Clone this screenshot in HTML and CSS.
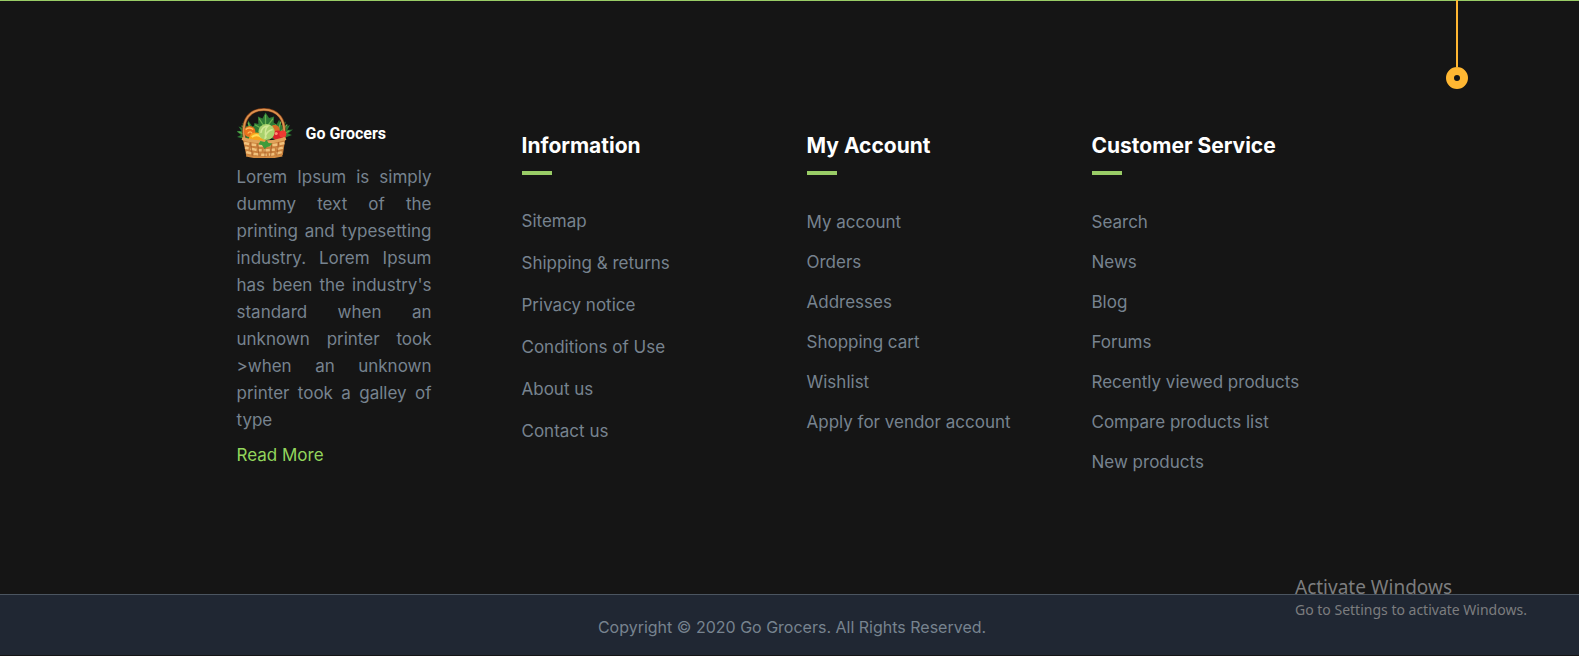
FILE: index.html
```html
<!DOCTYPE html>
<html lang="en">
<head>
<meta charset="utf-8">
<meta name="viewport" content="width=device-width, initial-scale=1">
<title>Go Grocers</title>
<link rel="stylesheet" href="styles.css">
</head>
<body>
<footer class="footer">
  <div class="pendant" aria-hidden="true"></div>
  <div class="footer-main">
    <section class="col about">
      <a class="brand" href="#">
        <svg class="brand-icon" viewBox="2 0 110 100" preserveAspectRatio="none" aria-hidden="true">
          <g fill="#2f7a35">
            <path d="M26 64 2 58l8-4L0 46l11 0-6-9 11 4-4-11 11 7 1-12 8 12 8-4 6 30z"/>
            <path d="M84 64l26-10-8-3 10-8-11 1 5-10-11 5 3-12-10 8-3-12-7 13-6-3-2 28z"/>
            <path d="M34 48l2-18 8 2-1-15 9 4 6-12 7 11 10-3-1 12 8 6-10 14z"/>
          </g>
          <g fill="none" stroke="#68b14f" stroke-width="2.5" stroke-linecap="round">
            <path d="M6 48l22 10M12 36l16 18M24 30l8 20M104 46L84 58M100 34L84 52M88 28l-6 20M58 14v22M46 22l10 16M72 22L60 38M38 34l14 8M78 34l-12 8"/>
          </g>
          <path d="M17 64C9 20 30 3 55 3s46 18 38 61" fill="none" stroke="#8b4519" stroke-width="6"/>
          <path d="M17 64C9 20 30 3 55 3s46 18 38 61" fill="none" stroke="#dc9250" stroke-width="3.5"/>
          <circle cx="27" cy="47" r="11" fill="#e8701c"/>
          <path d="M19 43q7-6 15 0M23 51q5-7 9 0" stroke="#ffc058" stroke-width="2.5" fill="none"/>
          <circle cx="76" cy="44" r="10" fill="#d96d26"/>
          <path d="M25 62q3-17 22-12 13 5 11 18H28z" fill="#f7a51c"/>
          <path d="M31 58q10-8 20 1" stroke="#ffdc55" stroke-width="4" fill="none"/>
          <circle cx="82" cy="55" r="10" fill="#d9212a"/>
          <circle cx="92" cy="52" r="7" fill="#ee3b32"/>
          <circle cx="79" cy="51" r="3" fill="#ff8d73"/>
          <circle cx="60" cy="48" r="16" fill="#a9d16d"/>
          <path d="M49 50q2-14 14-14-8 6-4 24M57 62q1-16 15-19" fill="none" stroke="#d2e896" stroke-width="3"/>
          <path d="M13 60q42 12 84 0l-5 34q-34 12-72 0z" fill="#c9803c"/>
          <g fill="none" stroke="#f1c17c" stroke-width="5">
            <path d="M16 70q40 10 79 0" stroke-dasharray="10 4"/>
            <path d="M18 79q38 11 75 0" stroke-dasharray="7 4 12 3"/>
            <path d="M20 88q36 11 71 0" stroke-dasharray="11 4"/>
          </g>
          <g stroke="#a55a25" stroke-width="1.5"><path d="M29 68l3 28M43 71l2 26M57 72v26M70 71l-2 26M84 68l-4 27"/></g>
          <path d="M12 61q43 14 86 0" fill="none" stroke="#dfa25a" stroke-width="6"/>
          <path d="M20 95q35 9 71 0" fill="none" stroke="#d18b43" stroke-width="4"/>
          <path d="M56 82l-5-8-7-1 4-7 8 2 4-4 4 6 7 1-5 6-5 1z" fill="#3f9b3b"/>
        </svg>
        <span class="brand-name">Go Grocers</span>
      </a>
      <p class="about-text">Lorem Ipsum is simply dummy text of the printing and typesetting industry. Lorem Ipsum has been the industry's standard when an unknown printer took &gt;when an unknown printer took a galley of type</p>
      <a class="read-more" href="#">Read More</a>
    </section>
    <nav class="col links links-wide" aria-labelledby="info">
      <h2 id="info">Information</h2>
      <ul>
        <li><a href="#">Sitemap</a></li>
        <li><a href="#">Shipping &amp; returns</a></li>
        <li><a href="#">Privacy notice</a></li>
        <li><a href="#">Conditions of Use</a></li>
        <li><a href="#">About us</a></li>
        <li><a href="#">Contact us</a></li>
      </ul>
    </nav>
    <nav class="col links" aria-labelledby="account">
      <h2 id="account">My Account</h2>
      <ul>
        <li><a href="#">My account</a></li>
        <li><a href="#">Orders</a></li>
        <li><a href="#">Addresses</a></li>
        <li><a href="#">Shopping cart</a></li>
        <li><a href="#">Wishlist</a></li>
        <li><a href="#">Apply for vendor account</a></li>
      </ul>
    </nav>
    <nav class="col links" aria-labelledby="service">
      <h2 id="service">Customer Service</h2>
      <ul>
        <li><a href="#">Search</a></li>
        <li><a href="#">News</a></li>
        <li><a href="#">Blog</a></li>
        <li><a href="#">Forums</a></li>
        <li><a href="#">Recently viewed products</a></li>
        <li><a href="#">Compare products list</a></li>
        <li><a href="#">New products</a></li>
      </ul>
    </nav>
  </div>
  <div class="copyright">Copyright © 2020 Go Grocers. All Rights Reserved.</div>
  <aside class="watermark">
    <p class="watermark-title">Activate Windows</p>
    <p class="watermark-text">Go to Settings to activate Windows.</p>
  </aside>
</footer>
</body>
</html>
```
FILE: styles.css
```css
* {
  box-sizing: border-box;
}

body {
  margin: 0;
  background: #151515;
  color: #77838f;
  font: 17px/27px Inter, "Open Sans", sans-serif;
}

a {
  color: inherit;
  text-decoration: none;
}

p,
ul,
h2 {
  margin: 0;
  padding: 0;
}

ul {
  list-style: none;
}

.footer {
  position: relative;
  border-top: 1px solid #9c6;
}

.footer-main {
  display: grid;
  grid-template-columns: repeat(4, 1fr);
  max-width: 1144px;
  margin: 0 auto;
  padding: 107px 0 112px 4px;
}

.col {
  padding: 0 15px;
}

.about {
  padding-right: 75px;
}

.brand {
  display: flex;
  align-items: center;
  gap: 13px;
  height: 50px;
  margin-bottom: 6px;
}

.brand-icon {
  flex: none;
  width: 56px;
  height: 50px;
}

.brand-name {
  padding-top: 2px;
  color: #fff;
  font: bold 16px/24px Roboto, "Liberation Sans", sans-serif;
  white-space: nowrap;
}

.about-text {
  margin-bottom: 8px;
  text-align: justify;
}

.read-more {
  display: block;
  color: #92d55c;
}

.links {
  padding-top: 23px;
  white-space: nowrap;
}

.links h2 {
  color: #fff;
  font-size: 21px;
  font-weight: 700;
  line-height: 30px;
}

.links h2::after {
  content: "";
  display: block;
  width: 30px;
  height: 4px;
  margin: 10px 0 27px;
  background: #9c6;
}

.links li {
  line-height: 40px;
}

.links-wide li {
  line-height: 42px;
}

.links-wide h2::after {
  margin-bottom: 25px;
}

.copyright {
  padding: 19px 0 14px 5px;
  border-top: 1px solid #4b5560;
  background: #202733;
  font-size: 16px;
  text-align: center;
}

.pendant {
  position: absolute;
  top: -1px;
  right: 111px;
  display: flex;
  flex-direction: column;
  align-items: center;
}

.pendant::before {
  content: "";
  width: 2px;
  height: 67px;
  background: #ffb732;
}

.pendant::after {
  content: "";
  width: 6px;
  height: 6px;
  border: 8px solid #ffb732;
  border-radius: 50%;
}

.watermark {
  position: absolute;
  right: 48px;
  bottom: 35px;
  width: 236px;
  color: #7c7d7f;
  font-family: "Noto Sans", "Open Sans", sans-serif;
  white-space: nowrap;
}

.watermark-title {
  font-size: 19px;
  line-height: 26px;
}

.watermark-text {
  font-size: 14px;
  line-height: 20px;
}
```
